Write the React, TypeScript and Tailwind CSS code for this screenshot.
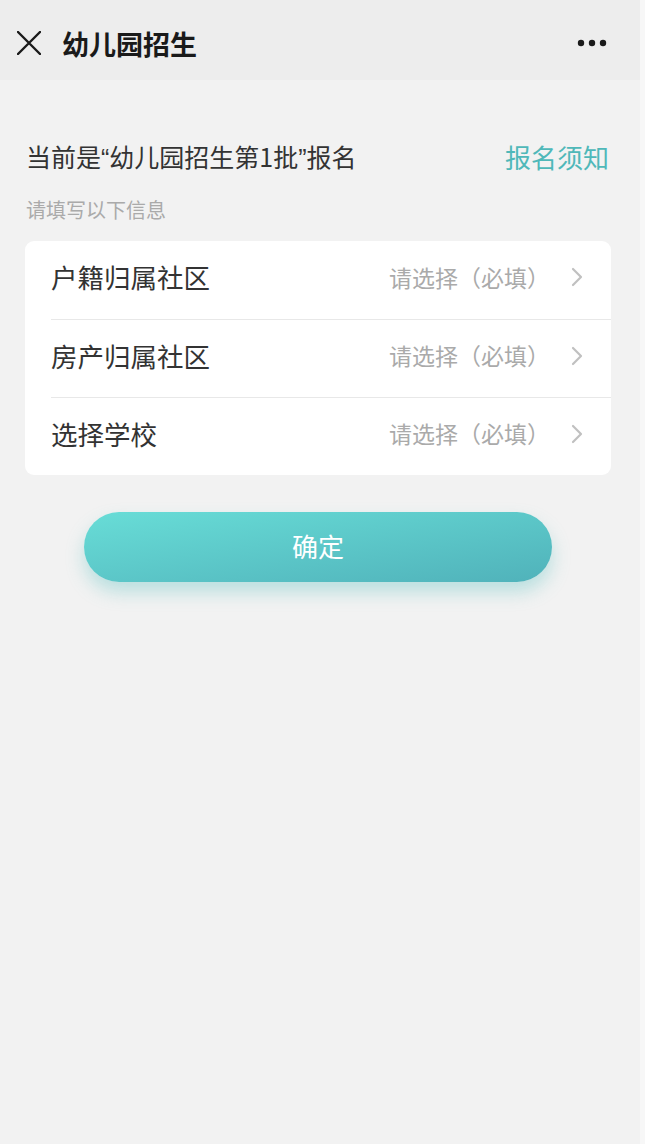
const rows = ['户籍归属社区', '房产归属社区', '选择学校'];

const font = { fontFamily: '"Noto Sans CJK SC", "Noto Sans", sans-serif' };

function Quote({ children }: { children: string }) {
  return <span style={{ fontFamily: '"Liberation Sans", sans-serif' }}>{children}</span>;
}

export default function App() {
  return (
    <div className="flex min-h-[1144px] w-[645px] bg-[#f7f7f7]" style={font}>
      <div className="flex w-[640px] flex-col bg-[#f2f2f2]">
        {/* 顶部导航 */}
        <header className="flex h-[80px] items-center bg-[#ededed] pl-[17px] pr-[33px] pt-[6px]">
          <svg width="24" height="24" viewBox="0 0 24 24" className="mt-[-1px] text-[#1a1a1a]">
            <path d="M1 1 L23 23 M23 1 L1 23" stroke="currentColor" strokeWidth="2.4" strokeLinecap="round" />
          </svg>
          <h1 className="ml-[21px] text-[27px] font-bold leading-none text-[#1a1a1a]">幼儿园招生</h1>
          <svg width="30" height="8" viewBox="0 0 30 8" className="ml-auto mt-[-1px] text-[#1a1a1a]">
            <circle cx="4" cy="4" r="3.2" fill="currentColor" />
            <circle cx="15" cy="4" r="3.2" fill="currentColor" />
            <circle cx="26" cy="4" r="3.2" fill="currentColor" />
          </svg>
        </header>

        <main className="px-[25px] pt-[58px]">
          <div className="flex items-center justify-between pl-[1px] pr-[6px]">
            <p className="text-[25px] leading-[36px] text-[#333]">
              当前是<Quote>“</Quote>幼儿园招生第1批<Quote>”</Quote>报名
            </p>
            <a className="text-[26px] leading-[36px] text-[#4fb8b9]">报名须知</a>
          </div>
          <p className="mt-[20px] pl-[1px] text-[20px] leading-[28px] text-[#aaa]">请填写以下信息</p>

          <div className="mt-[17px] w-[586px] rounded-[9px] bg-white pl-[26px]">
            {rows.map((label, i) => (
              <div
                key={label}
                className={`flex h-[78px] items-center pb-[6px] pr-[27px] ${i > 0 ? 'border-t border-[#e8e8e8]' : ''}`}
              >
                <span className="text-[26.5px] text-[#333]">{label}</span>
                <span className="ml-auto text-[23px] text-[#aaa]">请选择（必填）</span>
                <svg width="14" height="22" viewBox="0 0 14 22" className="ml-[20px] text-[#c0c0c0]">
                  <path d="M3 3 L11 11 L3 19" fill="none" stroke="currentColor" strokeWidth="2.2" strokeLinecap="round" strokeLinejoin="round" />
                </svg>
              </div>
            ))}
          </div>

          <div className="flex justify-center pt-[37px]">
            <button className="ml-[-4px] h-[70px] w-[468px] rounded-full bg-gradient-to-br from-[#68ddd7] to-[#50b2ba] pb-[4px] text-[26px] text-white shadow-[0_10px_18px_rgba(80,190,190,0.35)]">
              确定
            </button>
          </div>
        </main>
      </div>
    </div>
  );
}
